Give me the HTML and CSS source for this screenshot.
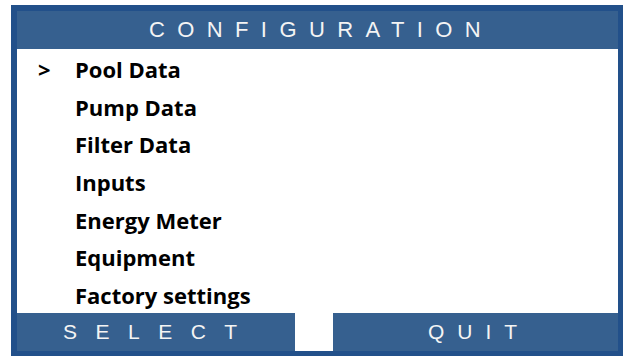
FILE: index.html
```html
<!DOCTYPE html>
<html>
<head>
  <meta charset="utf-8">
  <title>Configuration</title>
  <link rel="stylesheet" href="styles.css">
</head>
<body>
  <div class="pantalla">
    <div class="cabecera">CONFIGURATION</div>
    <!-- Menu de opciones -->
    <ul class="menu">
      <li class="activo"><span class="cursor">&gt;</span>Pool Data</li>
      <li><span class="cursor"></span>Pump Data</li>
      <li><span class="cursor"></span>Filter Data</li>
      <li><span class="cursor"></span>Inputs</li>
      <li><span class="cursor"></span>Energy Meter</li>
      <li><span class="cursor"></span>Equipment</li>
      <li><span class="cursor"></span>Factory settings</li>
    </ul>
    <div class="pie">
      <div class="boton seleccionar">SELECT</div>
      <div class="boton salir">QUIT</div>
    </div>
  </div>
</body>
</html>
```

FILE: styles.css
```css
* {
  box-sizing: border-box;
}

body {
  margin: 0;
  padding: 0;
  background: #fff;
  font-family: "Liberation Sans", Arial, sans-serif;
}

.pantalla {
  width: 612px;
  margin: 5px 0 0 11px;
  border-style: solid;
  border-color: #22508a;
  border-width: 6px 5px 5px 6px;
  background: #fff;
}

.cabecera {
  height: 38px;
  background: #36608f;
  color: #f4f4f4;
  font-size: 22px;
  line-height: 38px;
  letter-spacing: 12.4px;
  text-align: center;
  padding-left: 7px;
}

.menu {
  list-style: none;
  margin: 0;
  padding: 2px 0 0 0;
  height: 264px;
}

.menu li {
  height: 37.7px;
  line-height: 37.7px;
  display: flex;
  font-family: "Open Sans", sans-serif;
  font-weight: 700;
  font-size: 22px;
  color: #000;
}

.cursor {
  width: 58px;
  padding-left: 21px;
}

.pie {
  display: flex;
  gap: 38px;
  height: 38px;
}

.boton {
  background: #36608f;
  color: #f4f4f4;
  font-size: 21px;
  line-height: 38px;
}

.seleccionar {
  width: 278px;
  letter-spacing: 18.5px;
  padding-left: 46px;
}

.salir {
  flex: 1;
  letter-spacing: 13px;
  padding-left: 95px;
}
```
